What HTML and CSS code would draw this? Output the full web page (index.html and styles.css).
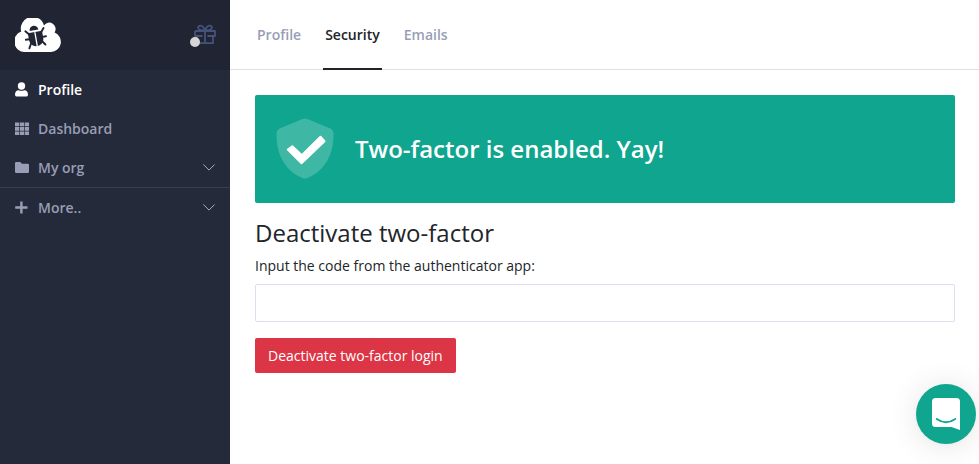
FILE: index.html
```html
<!DOCTYPE html>
<html lang="en">
<head>
<meta charset="utf-8">
<title>Security</title>
<link rel="stylesheet" href="styles.css">
</head>
<body>
<div class="app">
  <aside class="sidebar">
    <header class="brand">
      <svg class="logo" width="46" height="34" viewBox="0 0 46 34">
        <path fill="#fff" d="M10 34A10.500 10.500 0 0 1 6.200 13.600A11.700 11.700 0 0 1 29 7.500A6.300 6.300 0 0 1 39.600 14.400A10.200 10.200 0 0 1 36 34Z"/>
        <g transform="rotate(-10 21 19)" fill="#202433" stroke="#202433" stroke-linecap="round">
          <path stroke="none" d="M15.800 12a4.400 4.600 0 0 1 8.800 0z"/>
          <path stroke="none" d="M13.600 13.800H28V21Q28 26 22.800 28H18.800Q13.600 26 13.600 21Z"/>
          <path fill="none" stroke-width="1.900" d="M14.500 15L11.500 11.500M27 15L30 11.500M14 20H10.500M27.500 20H31M15 24.500L12.500 29M26.500 24.500L29 28"/>
          <path fill="none" stroke="#fff" stroke-width="1.300" d="M20.700 14.500V27.500"/>
        </g>
      </svg>
      <span class="gift">
        <svg width="22" height="21" viewBox="0 0 22 21" fill="none" stroke="#46527a" stroke-width="1.800" stroke-linejoin="round">
          <path d="M3 12v7.200h16V12M1 7h20v5H13.500M8.500 12H1V7M11 7v12M11 6.500C7 6.500 4 5.500 4 3.600C4 1.500 8.500-.5 11 6.500C13.500-.5 18 1.500 18 3.600C18 5.500 15 6.500 11 6.500"/>
        </svg>
        <i class="gift-dot"></i>
      </span>
    </header>
    <nav class="menu">
      <a class="item active">
        <svg class="icon" width="14" height="15" viewBox="0 0 14 15"><circle cx="6.500" cy="4" r="3.700"/><path d="M0 12.800C0 10 1.300 8.200 3.600 8.200Q6.500 9.500 9.400 8.200C11.700 8.200 13 10 13 12.800Q13 14.500 11.500 14.500H1.500Q0 14.500 0 12.800Z"/></svg>
        <span>Profile</span>
      </a>
      <a class="item">
        <svg class="icon" width="14" height="15" viewBox="0 0 14 15"><path d="M0 1.500h4.200v3.800H0zM4.900 1.500h4.200v3.800H4.900zM9.800 1.500h4.200v3.800H9.800zM0 6h4.200v3.800H0zM4.900 6h4.200v3.800H4.900zM9.800 6h4.200v3.800H9.800zM0 10.500h4.200v3.500H0zM4.900 10.500h4.200v3.500H4.900zM9.800 10.500h4.200v3.500H9.800z"/></svg>
        <span>Dashboard</span>
      </a>
      <a class="item">
        <svg class="icon" width="14" height="15" viewBox="0 0 14 15"><path d="M1.200 2H5.200L7 3.800H12.800Q14 3.800 14 5V11.800Q14 13 12.800 13H1.200Q0 13 0 11.800V3.200Q0 2 1.200 2Z"/></svg>
        <span>My org</span>
        <svg class="chevron" width="12" height="7" viewBox="0 0 12 7"><path d="M.4.500L6 6.100L11.600.500"/></svg>
      </a>
      <a class="item divided">
        <svg class="icon" width="14" height="15" viewBox="0 0 14 15"><path d="M5.200 1.500h2.400v4.800H12.500v2.400H7.600V13.600H5.200V8.700H.2V6.300h5z"/></svg>
        <span>More..</span>
        <svg class="chevron" width="12" height="7" viewBox="0 0 12 7"><path d="M.4.500L6 6.100L11.600.500"/></svg>
      </a>
    </nav>
  </aside>
  <main class="main">
    <nav class="tabs">
      <a class="tab">Profile</a>
      <a class="tab current">Security</a>
      <a class="tab">Emails</a>
    </nav>
    <section class="content">
      <div class="banner">
        <svg class="shield" width="58" height="62" viewBox="0 0 58 62">
          <path fill="#3eb7a5" d="M26.500 1Q29 0 31.500 1L54.500 10.500Q57.500 12 57.500 15.500C58 36 49 53 31.500 60Q29 61 26.500 60C9 53 0 36 .5 15.500Q.5 12 3.500 10.500Z"/>
          <path fill="#fff" stroke="#fff" stroke-width="2" stroke-linejoin="round" d="M11.800 31.500L16.300 28.200L25.800 37.300L44.500 18.700L48.500 23.200L25.500 45.200Z"/>
        </svg>
        <strong class="banner-text">Two-factor is enabled. Yay!</strong>
      </div>
      <h2 class="title">Deactivate two-factor</h2>
      <label class="label" for="code">Input the code from the authenticator app:</label>
      <input class="input" id="code" type="text">
      <button class="button" type="button">Deactivate two-factor login</button>
    </section>
  </main>
</div>
<div class="chat">
  <svg width="28" height="32" viewBox="0 0 28 32">
    <path fill="#fff" d="M3.500 0H24.500Q28 0 28 3.500V32L19.500 29H3.500Q0 29 0 25.500V3.500Q0 0 3.500 0Z"/>
    <path fill="none" stroke="#0fa58e" stroke-width="1.800" stroke-linecap="round" d="M4.700 21Q14 27.500 23.300 21"/>
  </svg>
</div>
</body>
</html>
```

FILE: styles.css
```css
* { box-sizing: border-box; }
body {
  margin: 0;
  overflow: hidden;
  background: #fff;
  color: #212529;
  font: 14px/21px "Open Sans", "Noto Sans", sans-serif;
}
.app { display: flex; height: 464px; }
.sidebar { width: 230px; flex: none; background: #252a3a; }
.brand {
  display: flex;
  align-items: flex-start;
  justify-content: space-between;
  height: 70px;
  padding: 18px 14px 0 15px;
  background: #202433;
}
.logo { display: block; }
.gift { position: relative; width: 22px; height: 21px; margin-top: 6px; }
.gift svg { display: block; }
.gift-dot {
  position: absolute;
  left: -4px;
  top: 13px;
  width: 10px;
  height: 10px;
  border-radius: 50%;
  background: #d6d6d6;
}
.item {
  display: flex;
  align-items: center;
  height: 39px;
  padding: 0 15px;
  color: #989eb5;
  font-weight: 600;
}
.item.active { color: #fff; }
.item.divided { height: 40px; border-top: 1px solid #363d57; }
.icon { margin-right: 9px; fill: currentColor; }
.chevron { margin-left: auto; fill: none; stroke: #a9aec2; stroke-width: 1; }
.main { flex: 1; min-width: 0; }
.tabs {
  display: flex;
  gap: 20px;
  height: 70px;
  padding: 0 25px;
  border-bottom: 1px solid #dee0e2;
}
.tab {
  height: 70px;
  padding: 24px 2px 0;
  color: #989eb5;
  font-weight: 600;
}
.tab.current { color: #212529; border-bottom: 2px solid #212529; }
.content { padding: 25px 24px 0 25px; }
.banner {
  display: flex;
  align-items: center;
  gap: 21px;
  height: 108px;
  padding-left: 21px;
  border-radius: 2px;
  background: #0fa58e;
}
.banner-text { color: #fff; font-size: 24px; line-height: 32px; font-weight: 600; }
.title { margin: 15px 0 8px; font-size: 24px; line-height: 29px; font-weight: 400; }
.label { display: block; margin-bottom: 8px; }
.input {
  display: block;
  width: 100%;
  height: 38px;
  border: 1px solid #dcdfec;
  border-radius: 2px;
  background: #fff;
}
.button {
  display: block;
  height: 35px;
  margin-top: 16px;
  padding: 0 13px;
  border: 0;
  border-radius: 2px;
  background: #dc3545;
  color: #fff;
  font: inherit;
}
.chat {
  position: fixed;
  right: 3px;
  bottom: 20px;
  display: flex;
  align-items: center;
  justify-content: center;
  width: 60px;
  height: 60px;
  border-radius: 50%;
  background: #0fa58e;
  box-shadow: 0 1px 6px rgba(0, 0, 0, .04), 0 2px 32px rgba(0, 0, 0, .11);
}
```
